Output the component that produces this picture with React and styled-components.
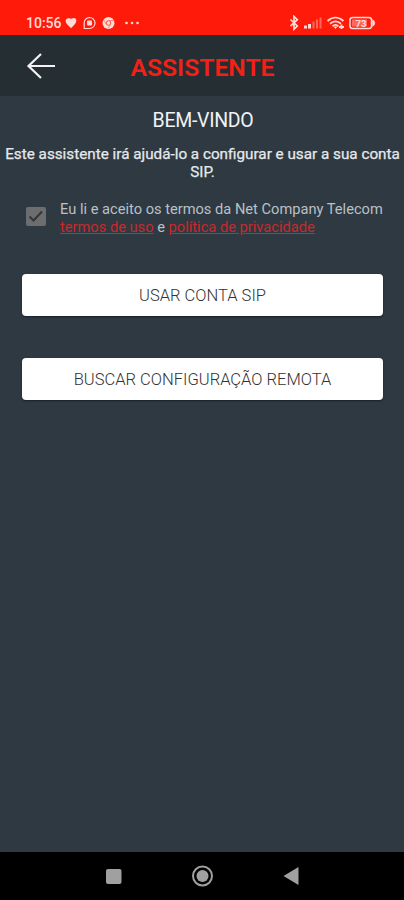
import React from 'react'
import styled, { createGlobalStyle } from 'styled-components'

const colors = {
  primary: '#ff1a0a',
  title: '#f52015',
  link: '#c9292b',
  header: '#252e33',
  body: '#2f3941'
}

const GlobalStyle = createGlobalStyle`
  * {
    box-sizing: border-box;
  }
  body {
    margin: 0;
    background: ${colors.body};
    font-family: Roboto, 'Liberation Sans', sans-serif;
  }
`

const Screen = styled.div`
  display: flex;
  flex-direction: column;
  width: 404px;
  height: 900px;
  overflow: hidden;
  background: ${colors.body};
`

const StatusBar = styled.div`
  display: flex;
  justify-content: space-between;
  flex: none;
  height: 35px;
  padding: 10px 27px 0 26px;
  background: ${colors.primary};
  color: #ffdcd8;
`

const StatusGroup = styled.div`
  display: flex;
  align-items: center;
  height: 25px;
`

const Time = styled.span`
  width: 39px;
  padding-top: 2px;
  font-size: 14px;
  font-weight: 500;
  line-height: 25px;
  white-space: nowrap;
`

const Header = styled.header`
  display: grid;
  grid-template-columns: 80px 1fr 80px;
  align-items: center;
  flex: none;
  height: 61px;
  background: ${colors.header};
  border-top: 1px solid #1d3035;
`

const BackButton = styled.button`
  display: flex;
  padding: 0 0 0 26px;
  border: 0;
  background: none;
`

const Title = styled.h1`
  margin: 4px 0 0 1px;
  color: ${colors.title};
  font-size: 24.7px;
  font-weight: 600;
  line-height: 30px;
  text-align: center;
`

const Content = styled.main`
  display: flex;
  flex-direction: column;
  flex: 1;
  padding-top: 13px;
`

const Welcome = styled.h2`
  margin: 0 0 0 2px;
  color: #f1f3f5;
  font-size: 19.5px;
  font-weight: 400;
  letter-spacing: -0.3px;
  line-height: 24px;
  text-align: center;
`

const Intro = styled.p`
  margin: 12px 0 0 1px;
  color: #e6e9eb;
  font-size: 15.25px;
  font-weight: 400;
  line-height: 18px;
  text-align: center;
  -webkit-text-stroke: 0.25px;
`

const Terms = styled.label`
  display: flex;
  align-items: center;
  gap: 14px;
  margin-top: 18px;
  padding-left: 26px;
`

const Checkbox = styled.span`
  display: flex;
  flex: none;
  width: 20px;
  height: 19px;
  margin-bottom: 2px;
  border-radius: 2px;
  background: #6b6d6e;
`

const TermsText = styled.span`
  padding-top: 2px;
  color: #b9c0c6;
  font-size: 14.65px;
  line-height: 17.5px;
  white-space: nowrap;
`

const Link = styled.a`
  color: ${colors.link};
  text-decoration: underline;
`

const Actions = styled.div`
  display: flex;
  flex-direction: column;
  gap: 42px;
  margin-top: 38px;
  padding: 0 21px 0 22px;
`

const Button = styled.button`
  height: 42px;
  padding: 0;
  border: 0;
  border-radius: 4px;
  background: #fff;
  box-shadow: 0 1px 2px #15202a;
  color: #333;
  font-family: inherit;
  font-size: 16.55px;
  font-weight: 300;
`

const NavBar = styled.nav`
  flex: none;
  height: 48px;
  background: #000;
`

const NotificationIcons = () => (
  <svg width="76" height="16" viewBox="0 0 76 16" fill="none">
    <path
      d="M6 13.200C3.800 11 .6 8.600.6 5.800C.6 3.600 2.600 2.800 4.200 3.300L6 3.700L7.800 3.300C9.800 2.600 11.500 4 11.300 6C11 8.800 8.200 11 6 13.200Z"
      fill="currentColor"
    />
    <path
      d="M24.500 2.500a5.500 5.500 0 1 1 0 11h-5.300v-5.500a5.400 5.400 0 0 1 5.300-5.500Z"
      stroke="currentColor"
      strokeWidth="1.200"
    />
    <rect x="22" y="5.500" width="5" height="5" rx="1" fill="currentColor" />
    <circle cx="43.500" cy="8" r="6" fill="currentColor" />
    <circle cx="43.500" cy="8" r="2.300" stroke="#f5523f" />
    <path d="M43.500 5.500h5M41.300 9.200l-2.600-4M45.600 9.300l-2.300 4" stroke="#fa7a68" strokeWidth=".8" />
    <g fill="currentColor">
      <circle cx="61.500" cy="8" r="1.300" />
      <circle cx="67" cy="8" r="1.300" />
      <circle cx="72.500" cy="8" r="1.300" />
    </g>
  </svg>
)

const SystemIcons = () => (
  <svg width="88" height="16" viewBox="0 0 88 16" fill="none" stroke="currentColor">
    <path d="M1.500 4.500L8.300 11L5 14.200V1.500L8.300 4.700L1.500 11.200" strokeWidth="1.700" />
    <g fill="currentColor" stroke="none">
      <rect x="15" y="10.500" width="3" height="3" />
      <rect x="19" y="9" width="3" height="4.500" />
      <rect x="23.500" y="6.500" width="2" height="7" opacity=".4" />
      <rect x="27" y="4.500" width="2" height="9" opacity=".4" />
      <rect x="30.500" y="2.500" width="2" height="11" opacity=".4" />
    </g>
    <path d="M38.500 6c5-4.500 11-4.500 16 0M41 8.700c3.500-3 7.500-3 11 0M43.500 11.200c2-1.700 4-1.700 6 0" strokeWidth="1.800" />
    <path d="M44.500 11.500h4l-2 2.500z" fill="currentColor" stroke="none" />
    <path d="M50 12h5M52.500 9.500v4.500" strokeWidth="1.800" />
    <rect x="61" y="2.500" width="21.500" height="11" rx="2.500" strokeWidth="1.500" />
    <path d="M83.500 4.500c3 1.500 3 5.500 0 7z" fill="currentColor" strokeWidth=".5" />
    <rect x="63" y="4.500" width="15" height="7" fill="currentColor" stroke="none" opacity=".4" />
    <text
      x="72"
      y="11.500"
      textAnchor="middle"
      fontSize="9.500"
      fontWeight="700"
      fill="currentColor"
      stroke="none"
    >
      73
    </text>
  </svg>
)

const BackArrow = () => (
  <svg width="30" height="28" viewBox="0 0 30 28" fill="none" stroke="#f2f2f2">
    <path d="M15 2L2.500 14L15 26M2.500 14H29" strokeWidth="2.200" />
  </svg>
)

const Check = () => (
  <svg width="20" height="19" viewBox="0 0 20 19" fill="none" stroke="#2f383e">
    <path d="M3.500 9.500L7.500 13.500L16 4.500" strokeWidth="2" />
  </svg>
)

const NavIcons = () => (
  <svg width="404" height="48" viewBox="0 0 404 48" fill="#a0a0a0">
    <rect x="106" y="17" width="15.500" height="15" rx="2" />
    <circle cx="202.500" cy="24" r="9.500" fill="none" stroke="#a0a0a0" strokeWidth="2" />
    <circle cx="202.500" cy="24" r="6" />
    <path d="M283.500 24L298.500 15V33Z" />
  </svg>
)

export default () => (
  <Screen>
    <GlobalStyle />
    <StatusBar>
      <StatusGroup>
        <Time>10:56</Time>
        <NotificationIcons />
      </StatusGroup>
      <StatusGroup>
        <SystemIcons />
      </StatusGroup>
    </StatusBar>
    <Header>
      <BackButton aria-label="Voltar">
        <BackArrow />
      </BackButton>
      <Title>ASSISTENTE</Title>
    </Header>
    <Content>
      <Welcome>BEM-VINDO</Welcome>
      <Intro>
        Este assistente irá ajudá-lo a configurar e usar a sua conta SIP.
      </Intro>
      <Terms>
        <Checkbox>
          <Check />
        </Checkbox>
        <TermsText>
          Eu li e aceito os termos da Net Company Telecom
          <br />
          <Link>termos de uso</Link> e <Link>política de privacidade</Link>
        </TermsText>
      </Terms>
      <Actions>
        <Button>USAR CONTA SIP</Button>
        <Button>BUSCAR CONFIGURAÇÃO REMOTA</Button>
      </Actions>
    </Content>
    <NavBar>
      <NavIcons />
    </NavBar>
  </Screen>
)
